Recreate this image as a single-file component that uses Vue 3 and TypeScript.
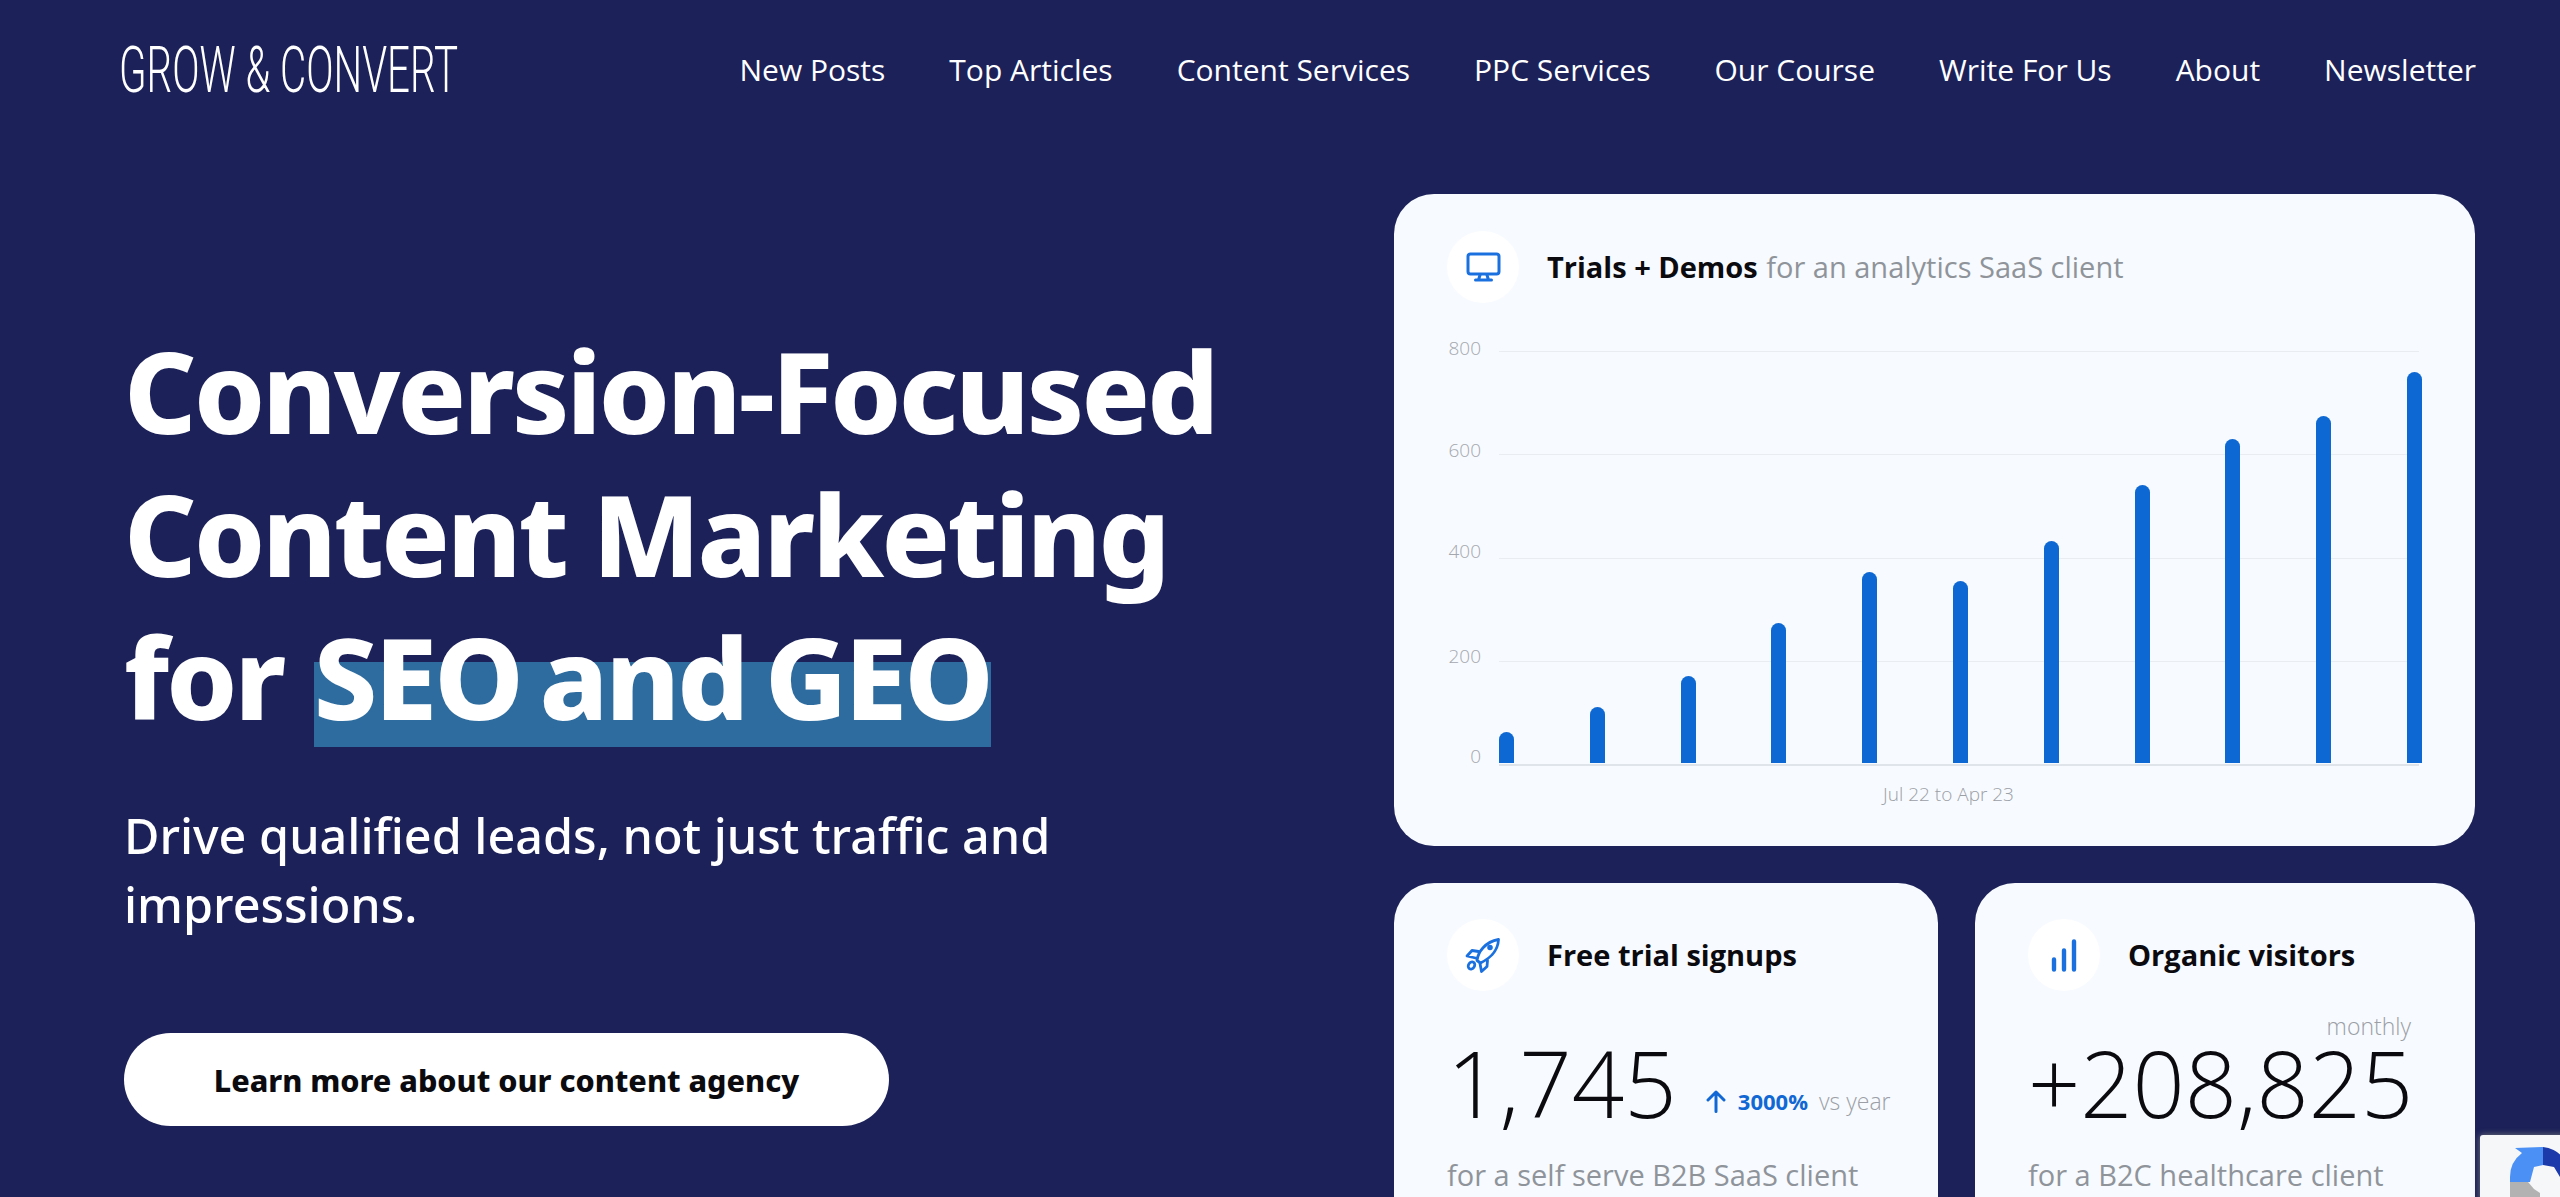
<script setup lang="ts">
const navItems: string[] = [
  'New Posts',
  'Top Articles',
  'Content Services',
  'PPC Services',
  'Our Course',
  'Write For Us',
  'About',
  'Newsletter'
]

// bar heights in px, measured off the chart
const bars: number[] = [31, 56, 87, 140, 191, 182, 222, 278, 324, 347, 391]

// labels don't sit at a constant distance from their lines in the original chart
const gridRows: { label: string; nudge: number }[] = [
  { label: '800', nudge: -15 },
  { label: '600', nudge: -16 },
  { label: '400', nudge: -19 },
  { label: '200', nudge: -17 }
]
</script>

<template>
  <div class="page">
    <header class="topbar">
      <a class="logo"><span class="logo-text">GROW &amp; CONVERT</span></a>
      <nav class="nav">
        <a v-for="item in navItems" :key="item" class="nav-link">{{ item }}</a>
      </nav>
    </header>

    <main class="hero">
      <section class="intro">
        <h1 class="headline">
          Conversion-Focused<br />
          Content Marketing<br />
          for <span class="mark">SEO and GEO</span>
        </h1>
        <p class="lead">Drive qualified leads, not just traffic and impressions.</p>
        <a class="cta">Learn more about our content agency</a>
      </section>

      <section class="results">
        <div class="card card-main">
          <div class="card-head">
            <span class="icon-wrap">
              <svg width="35" height="30" viewBox="0 0 35 30" fill="none" stroke="#1a70df" stroke-width="3" stroke-linecap="round" stroke-linejoin="round">
                <rect x="2" y="2" width="31" height="20" rx="2.5" />
                <path d="M14 23l-1.5 5M21 23l1.5 5M9.5 28h16" />
              </svg>
            </span>
            <h2 class="card-title">Trials + Demos <span class="muted">for an analytics SaaS client</span></h2>
          </div>

          <div class="chart">
            <div v-for="row in gridRows" :key="row.label" class="grid-row">
              <span class="grid-label" :style="{ marginTop: row.nudge + 'px' }">{{ row.label }}</span>
              <span class="grid-line"></span>
            </div>
            <div class="grid-row grid-row-base">
              <span class="grid-label" :style="{ marginTop: '-20px' }">0</span>
              <span class="grid-line grid-line-base"></span>
            </div>
            <div class="bars">
              <span v-for="(h, i) in bars" :key="i" class="bar" :style="{ height: h + 'px' }"></span>
            </div>
          </div>
          <div class="chart-range">Jul 22 to Apr 23</div>
        </div>

        <div class="card-pair">
          <div class="card card-small">
            <div class="card-head">
              <span class="icon-wrap">
                <svg width="36" height="36" viewBox="0 0 36 36" fill="none" stroke="#1a70df" stroke-width="2.8" stroke-linecap="round" stroke-linejoin="round">
                  <path d="M12 23.5C13 15 20 5 33.5 2.5 33 15 23 22.5 15.5 26Z" />
                  <path d="M13.5 14.5L7 13.5 2 19l8.5 2" />
                  <path d="M22.5 23.5l-.5 6-5.5 5-1.5-8" />
                  <ellipse cx="6.5" cy="28.5" rx="3" ry="3.8" transform="rotate(35 6.5 28.5)" />
                  <circle cx="25" cy="10.5" r="1.4" fill="#1a70df" />
                </svg>
              </span>
              <h2 class="card-title">Free trial signups</h2>
            </div>
            <div class="side-note"></div>
            <div class="figure-row">
              <span class="figure">1,745</span>
              <span class="delta">
                <svg width="22" height="23" viewBox="0 0 22 23" fill="none" stroke="#1168d4" stroke-width="3" stroke-linecap="round" stroke-linejoin="round">
                  <path d="M11 21.5V2M3 10l8-8 8 8" />
                </svg>
                <strong class="delta-num">3000%</strong>
                <span class="delta-note">vs year</span>
              </span>
            </div>
            <p class="card-caption">for a self serve B2B SaaS client</p>
          </div>

          <div class="card card-small card-small-wide">
            <div class="card-head">
              <span class="icon-wrap">
                <svg width="26" height="33" viewBox="0 0 26 33" fill="none" stroke="#1a70df" stroke-width="4.4" stroke-linecap="round">
                  <path d="M3 30.5V20.5M13 30.5V11.5M23 30.5V2.5" />
                </svg>
              </span>
              <h2 class="card-title">Organic visitors</h2>
            </div>
            <div class="side-note">monthly</div>
            <div class="figure-row">
              <span class="figure figure-wide">+208,825</span>
            </div>
            <p class="card-caption">for a B2C healthcare client</p>
          </div>
        </div>
      </section>
    </main>

    <!-- recaptcha badge, pinned to the corner -->
    <div class="captcha">
      <svg width="60" height="50" viewBox="0 0 60 50">
        <path d="M33 0A30 30 0 0 1 60 30H50L44 20 33 18Z" fill="#1c3aa9" />
        <path d="M33 0V18L24 20 20 35H0V30A30 30 0 0 1 12 6L5 1Z" fill="#4a90f5" />
        <path d="M0 35H18L24 42 30 46V60H0Z" fill="#b2b2b2" />
      </svg>
    </div>
  </div>
</template>

<style>
html,
body {
  margin: 0;
  background: #1c2259;
}
</style>

<style scoped>
.page {
  position: relative;
  width: 2560px;
  height: 1197px;
  overflow: hidden;
  background: #1c2259;
  color: #fff;
  font-family: "Noto Sans", "Open Sans", sans-serif;
}

.topbar {
  display: flex;
  justify-content: space-between;
  align-items: center;
  height: 140px;
  padding: 0 84px 0 119px;
}

.logo {
  display: block;
  width: 337px;
  white-space: nowrap;
}

.logo-text {
  display: inline-block;
  font-family: Roboto, sans-serif;
  font-size: 65px;
  font-weight: 300;
  line-height: 1;
  transform: scaleX(0.62);
  transform-origin: left center;
}

.nav {
  display: flex;
  gap: 64px;
  font-family: "Open Sans", sans-serif;
  font-size: 30px;
  line-height: 42px;
}

.nav-link {
  white-space: nowrap;
}

.hero {
  display: flex;
  justify-content: space-between;
  padding: 54px 85px 0 124px;
}

.intro {
  width: 1000px;
  padding-top: 125px;
}

.headline {
  margin: 0;
  font-size: 113px;
  font-weight: 800;
  letter-spacing: -2.9px;
  line-height: 143px;
  white-space: nowrap;
}

.mark {
  margin-left: 4px;
  background: linear-gradient(to bottom, transparent 0, transparent 63px, #2e6c9f 63px, #2e6c9f 148px, transparent 148px);
  background-repeat: no-repeat;
  word-spacing: -8px;
}

.lead {
  margin: 53px 0 0;
  width: 960px;
  font-size: 48.5px;
  font-weight: 500;
  line-height: 69px;
}

.cta {
  display: flex;
  justify-content: center;
  align-items: center;
  width: 765px;
  height: 93px;
  margin-top: 94px;
  border-radius: 47px;
  background: #fff;
  color: #0b0b0f;
  font-size: 30.5px;
  font-weight: 800;
}

.results {
  display: flex;
  flex-direction: column;
  gap: 37px;
  width: 1081px;
}

.card {
  box-sizing: border-box;
  border-radius: 40px;
  background: #f7fafe;
  color: #0b0b0f;
  font-family: "Open Sans", sans-serif;
}

.card-main {
  height: 652px;
  padding: 37px 56px 0 53px;
}

.card-head {
  display: flex;
  align-items: center;
  gap: 28px;
  height: 72px;
}

.icon-wrap {
  display: flex;
  flex: none;
  justify-content: center;
  align-items: center;
  width: 72px;
  height: 72px;
  border-radius: 50%;
  background: #fff;
}

.card-title {
  margin: 0;
  padding-bottom: 2px;
  font-size: 29px;
  font-weight: 700;
  white-space: nowrap;
}

.muted {
  margin-left: 1px;
  color: #8f949b;
  font-weight: 400;
}

.chart {
  position: relative;
  margin-top: 48px;
}

.grid-row {
  display: flex;
  align-items: flex-start;
  gap: 18px;
  height: 103.25px;
}

.grid-row-base {
  height: 2px;
}

.grid-label {
  width: 34px;
  color: #a4a8ae;
  font-size: 19px;
  font-weight: 300;
  line-height: 24px;
  text-align: right;
}

.grid-line {
  flex: 1;
  height: 1px;
  background: #e9edf1;
}

.grid-line-base {
  height: 2px;
  background: #dfe4ea;
}

.bars {
  position: absolute;
  left: 52px;
  bottom: 3px;
  display: flex;
  justify-content: space-between;
  align-items: flex-end;
  width: 923px;
}

.bar {
  width: 15px;
  border-radius: 8px 8px 0 0;
  background: #0e68d3;
}

.chart-range {
  margin-top: 16px;
  padding-left: 31px;
  color: #9b9fa6;
  font-size: 19px;
  font-weight: 300;
  line-height: 24px;
  text-align: center;
}

.card-pair {
  display: grid;
  grid-template-columns: 544px 500px;
  gap: 37px;
}

.card-small {
  height: 360px;
  padding: 36px 40px 0 53px;
}

.card-small-wide {
  padding-right: 64px;
}

.side-note {
  height: 30px;
  margin-top: 20px;
  color: #9b9fa6;
  font-size: 23px;
  font-weight: 300;
  line-height: 30px;
  text-align: right;
}

.figure-row {
  display: flex;
  align-items: flex-end;
  gap: 28px;
  margin-top: -3px;
}

.figure {
  font-size: 92px;
  font-weight: 300;
  line-height: 90px;
  white-space: nowrap;
}

.figure-wide {
  font-size: 91.5px;
}

.delta {
  display: flex;
  align-items: center;
  gap: 11px;
  height: 30px;
  margin-bottom: 12px;
  white-space: nowrap;
}

.delta-num {
  color: #1168d4;
  font-size: 22px;
  font-weight: 700;
}

.delta-note {
  color: #9b9fa6;
  font-size: 23px;
  font-weight: 300;
}

.card-caption {
  margin: 27px 0 0;
  color: #8f949b;
  font-size: 29px;
  line-height: 40px;
  white-space: nowrap;
}

.captcha {
  position: absolute;
  left: 2480px;
  top: 1135px;
  width: 256px;
  height: 60px;
  padding: 12px 0 0 30px;
  border-radius: 3px;
  background: #f6f7f9;
  box-shadow: 0 0 6px rgba(128, 128, 128, 0.9);
}
</style>
